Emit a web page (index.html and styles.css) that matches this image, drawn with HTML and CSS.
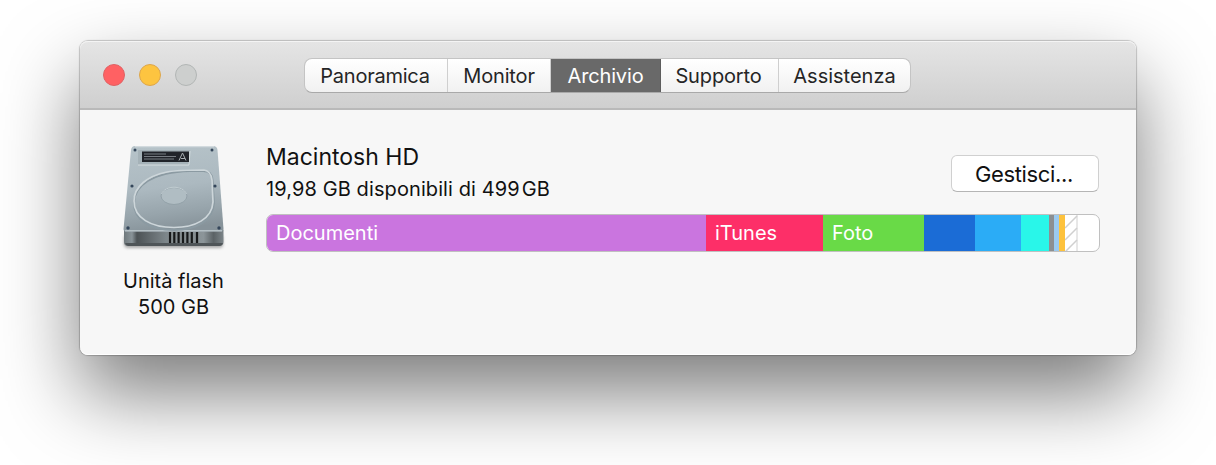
FILE: index.html
```html
<!DOCTYPE html>
<html lang="it">
<head>
  <meta charset="UTF-8">
  <meta name="viewport" content="width=device-width, initial-scale=1.0">
  <title>Archivio</title>
  <link rel="stylesheet" href="styles.css">
</head>
<body>

  <div class="window">
    <header class="titlebar">
      <div class="lights">
        <span class="light red"></span>
        <span class="light yellow"></span>
        <span class="light off"></span>
      </div>
      <nav class="tabs">
        <button class="tab panoramica">Panoramica</button>
        <button class="tab monitor">Monitor</button>
        <button class="tab archivio active">Archivio</button>
        <button class="tab supporto">Supporto</button>
        <button class="tab assistenza">Assistenza</button>
      </nav>
    </header>

    <main class="content">
      <div class="drive">
        <svg class="drive-icon" width="112" height="112" viewBox="0 0 112 112">
          <defs>
            <linearGradient id="metal" x1="0.2" y1="0" x2="0.35" y2="1">
              <stop offset="0" stop-color="#b6c3c9"/>
              <stop offset="0.5" stop-color="#acb9c0"/>
              <stop offset="0.8" stop-color="#97a4ab"/>
              <stop offset="1" stop-color="#87939a"/>
            </linearGradient>
            <linearGradient id="front" x1="0" y1="0" x2="1" y2="0">
              <stop offset="0" stop-color="#6f787c"/>
              <stop offset="0.08" stop-color="#899398"/>
              <stop offset="0.13" stop-color="#4c5255"/>
              <stop offset="0.42" stop-color="#7d868a"/>
              <stop offset="0.8" stop-color="#8c9599"/>
              <stop offset="0.9" stop-color="#5b6265"/>
              <stop offset="1" stop-color="#7c8589"/>
            </linearGradient>
            <filter id="soft" x="-10%" y="-20%" width="120%" height="150%">
              <feGaussianBlur stdDeviation="1.4"/>
            </filter>
            <filter id="smooth">
              <feGaussianBlur stdDeviation="0.5"/>
            </filter>
          </defs>
          <path d="M6 96H105V105Q105 108 101 108H10Q6 108 6 104Z" fill="#777" opacity="0.6" filter="url(#soft)"/>
          <path d="M6 90H105.500V102Q105.500 106 101 106H10Q6 106 6 102Z" fill="url(#front)"/>
          <path d="M7 103H105Q104 106 101 106H10Q8 106 7 103Z" fill="#4f5558"/>
          <path d="M17 6H95Q99 6 99.500 10L105.500 89Q105.500 91.500 103 91.500H8Q5.500 91.500 5.500 89L13 10Q13.500 6 17 6Z" fill="url(#metal)"/>
          <path d="M7 90.700H104" stroke="#b5c0c5" stroke-width="1.600"/>
          <path d="M17 6.700H96" stroke="#d2dade" stroke-width="1.200"/>
          <path d="M20 10H72V25H20Z" fill="#a5b2b8"/>
          <path d="M20 25H71L72 11" stroke="#d5dde0" fill="none"/>
          <path d="M24 11.500H71V22H24Z" fill="#202329"/>
          <g filter="url(#smooth)">
            <path d="M26 14H48M26 16.500H58M26 19H56" stroke="#777c82" stroke-width="1"/>
            <path d="M61 20.500L64.500 13L68 20.500M63 18.500H67" stroke="#a8aeb2" fill="none"/>
            <path d="M72 31H85Q94 31 94.500 40L96 63C95 81 78 90 56 90C32 90 16 80 16 63C16 46 34 32 72 31Z" fill="none" stroke="#8b9aa2" stroke-width="2"/>
            <path d="M49 32Q60 30 86 30Q93 31 94 40L95 62C94 79 77 87.500 56 87.500C33 87.500 16 78 16 61C16 47 29 36 49 32" fill="none" stroke="#cdd6da" stroke-width="1.700"/>
            <ellipse cx="56" cy="56" rx="13" ry="8.500" fill="#b0bdc3" stroke="#93a1a8"/>
            <path d="M43.500 54C47 45 65 45 68.500 54" fill="none" stroke="#c2cdd2"/>
          </g>
          <g fill="#34465a">
            <circle cx="17" cy="10" r="1.500"/>
            <circle cx="94" cy="10" r="1.500"/>
            <circle cx="14" cy="46" r="1.600"/>
            <circle cx="97" cy="46" r="1.600"/>
            <circle cx="10" cy="88" r="1.700"/>
            <circle cx="101" cy="88" r="1.700"/>
          </g>
          <path d="M50 92H81V103H50Z" fill="#858d90"/>
          <path d="M52 92V103M56.300 92V103M60.600 92V103M65 92V103M69.400 92V103M73.800 92V103M79 92V103" stroke="#17191a" stroke-width="2.200"/>
        </svg>
        <div class="drive-label"><span class="kind">Unità flash</span><br><span class="size">500 GB</span></div>
      </div>

      <section class="volume">
        <div class="volume-head">
          <div class="volume-text">
            <h1>Macintosh HD</h1>
            <p>19,98 GB disponibili di 499<span class="thin"></span>GB</p>
          </div>
          <button class="manage">Gestisci...</button>
        </div>
        <div class="usage">
          <div class="seg documents">Documenti</div>
          <div class="seg itunes">iTunes</div>
          <div class="seg photos">Foto</div>
          <div class="seg apps"></div>
          <div class="seg ios"></div>
          <div class="seg mail"></div>
          <div class="seg system"></div>
          <div class="seg books"></div>
          <div class="seg other"></div>
          <div class="seg purgeable">
            <svg width="13" height="36" viewBox="0 0 13 36">
              <path d="M0 13L12 1M0 25L12 13M0 37L12 25" stroke="#d0d0d0" stroke-width="1.500"/>
              <path d="M12 0V36" stroke="#d0d0d0"/>
            </svg>
          </div>
        </div>
      </section>
    </main>
  </div>

</body>
</html>
```
FILE: styles.css
```css
* {
  box-sizing: border-box;
}
body {
  margin: 0;
  padding: 41px 80px 0;
  height: 465px;
  overflow: hidden;
  background: #fff;
  color: #111;
  font-family: Inter, sans-serif;
  font-size: 20px;
}
button {
  font: inherit;
  color: inherit;
  padding: 0;
  border: none;
}
.window {
  height: 314px;
  border-radius: 8px;
  background: #f7f7f7;
  box-shadow: inset 0 -1px #fff, 0 0 1px 1px rgba(0, 0, 0, 0.2), 0 38px 80px rgba(0, 0, 0, 0.52);
}
.titlebar {
  display: flex;
  height: 69px;
  padding: 17px 23px 0;
  border-bottom: 2px solid #b9b9b9;
  border-radius: 8px 8px 0 0;
  background: linear-gradient(#e5e5e5, #cfcfcf);
  box-shadow: inset 0 1px #f4f4f4;
}
.lights {
  display: flex;
  gap: 14px;
  width: 201px;
  padding-top: 6px;
}
.light {
  width: 22px;
  height: 22px;
  border: 1px solid;
  border-radius: 50%;
}
.red {
  background: #ff6163;
  border-color: #df6264;
}
.yellow {
  background: #fdc440;
  border-color: #dda64c;
}
.off {
  background: #cdcfce;
  border-color: #b2b6b5;
}
.tabs {
  display: flex;
  height: 35px;
  border: 1px solid #c4c4c4;
  border-bottom-color: #a9a9a9;
  border-radius: 8px;
  background: linear-gradient(#fff, #f1f1f1);
}
.tab {
  height: 33px;
  padding-top: 1px;
  border-right: 1px solid #cfcfcf;
  background: none;
  color: #252525;
  letter-spacing: -0.15px;
  line-height: 33px;
}
.tab:last-child {
  border-right: none;
}
.panoramica {
  width: 143px;
  padding-right: 2px;
  letter-spacing: -0.25px;
}
.monitor {
  width: 103px;
}
.archivio {
  width: 110px;
}
.supporto {
  width: 118px;
  padding-right: 2px;
}
.assistenza {
  width: 131px;
  letter-spacing: 0;
}
.tab.active {
  background: #696969;
  border-color: #5d5d5d;
  color: #fff;
}
.content {
  display: flex;
  padding: 26px 36px 0 38px;
}
.drive {
  width: 112px;
  margin-right: 36px;
  text-align: center;
}
.drive-icon {
  display: block;
  margin-top: 4px;
}
.drive-label {
  margin: 17px 1px 0 0;
  line-height: 25.5px;
}
.volume {
  flex: 1;
}
.volume-head {
  display: flex;
  justify-content: space-between;
  height: 78px;
}
h1 {
  margin: 5px 0 0;
  font-size: 23px;
  font-weight: 400;
  line-height: 32px;
}
p {
  margin: 1px 0 0;
  font-size: 20px;
  letter-spacing: 0.1px;
  line-height: 30px;
}
.thin {
  display: inline-block;
  width: 2px;
}
.manage {
  width: 148px;
  height: 37px;
  margin: 19px 1px 0 0;
  padding-right: 2px;
  border: 1px solid #d0d0d0;
  border-bottom-color: #b5b5b5;
  border-radius: 6px;
  background: #fff;
  font-size: 22px;
  letter-spacing: -0.35px;
}
.usage {
  display: flex;
  height: 38px;
  border: 1px solid #c0c0c0;
  border-radius: 7px;
  background: #fff;
  overflow: hidden;
}
.seg {
  color: #fff;
  line-height: 36px;
}
.documents {
  width: 439px;
  padding-left: 9px;
  background: #ca75df;
}
.itunes {
  width: 117px;
  padding-left: 9px;
  background: #fd2f68;
}
.photos {
  width: 101px;
  padding-left: 9px;
  background: #69da47;
}
.apps {
  width: 51px;
  background: #1b6cd6;
}
.ios {
  width: 46px;
  background: #2bacf6;
}
.mail {
  width: 28px;
  background: #29f6e9;
}
.system {
  width: 5px;
  background: #8c8f92;
}
.books {
  width: 5px;
  background: #9bcaf0;
}
.other {
  width: 6px;
  background: #fdc23d;
}
.purgeable svg {
  display: block;
}
```
